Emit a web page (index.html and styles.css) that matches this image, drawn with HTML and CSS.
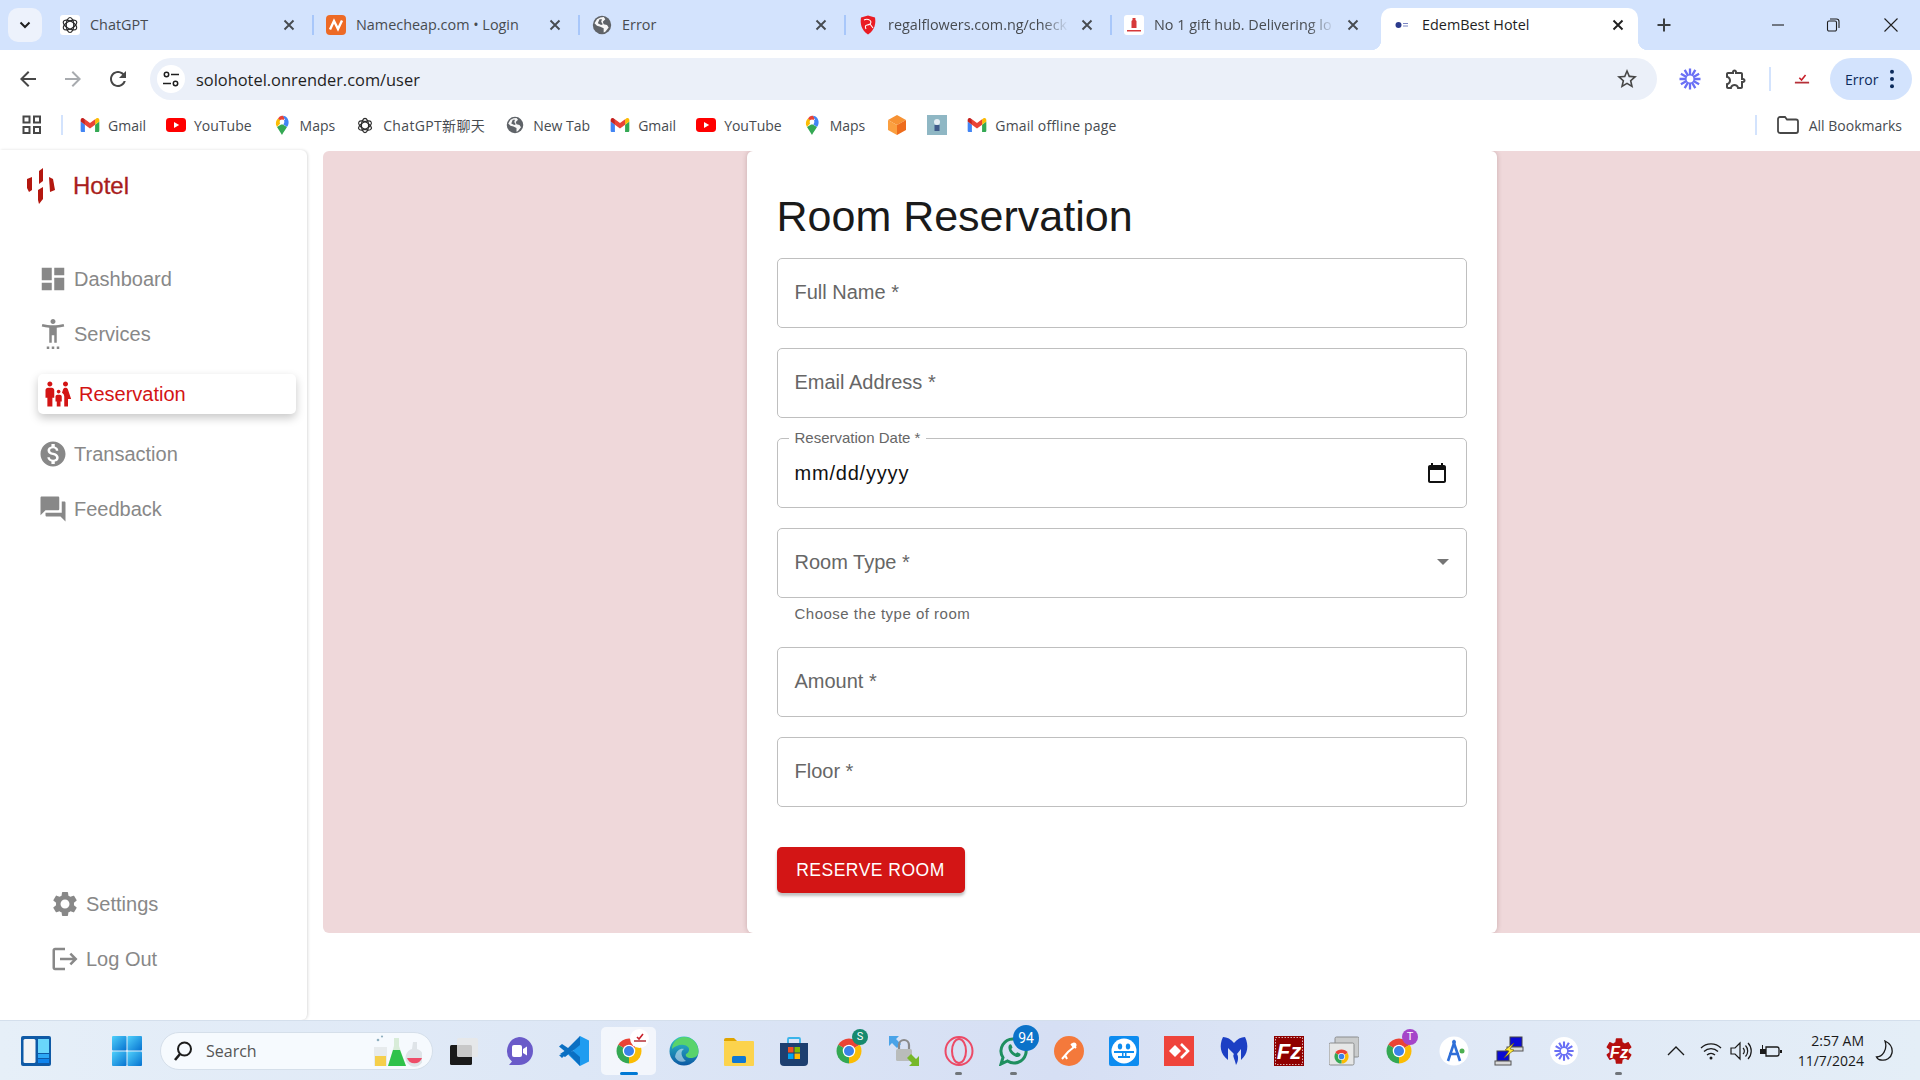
FILE: index.html
```html
<!DOCTYPE html>
<html lang="en">
<head>
    <meta charset="UTF-8">
    <meta name="viewport" content="width=device-width, initial-scale=1.0">
    <title>EdemBest Hotel</title>
    <link rel="stylesheet" href="styles.css">
</head>
<body>
    <!-- shared icons -->
    <svg class="defs" width="0" height="0">
        <defs>
            <linearGradient id="winBlue" x1="0" y1="0" x2="1" y2="1">
                <stop offset="0" stop-color="#4fd0fb"/>
                <stop offset="1" stop-color="#0672d0"/>
            </linearGradient>
            <linearGradient id="edgeBlue" x1="0" y1="0" x2="0" y2="1">
                <stop offset="0" stop-color="#2fc3c8"/>
                <stop offset="1" stop-color="#0c59a4"/>
            </linearGradient>
            <symbol id="i-openai" viewBox="0 0 24 24">
                <g fill="none" stroke="#2b2b2b" stroke-width="1.6">
                    <ellipse cx="12" cy="12" rx="5" ry="10"/>
                    <ellipse cx="12" cy="12" rx="5" ry="10" transform="rotate(60 12 12)"/>
                    <ellipse cx="12" cy="12" rx="5" ry="10" transform="rotate(120 12 12)"/>
                </g>
            </symbol>
            <symbol id="i-globe" viewBox="0 0 24 24">
                <circle cx="12" cy="12" r="11" fill="#5f6368"/>
                <path fill="#fff" d="M10 3 14 2.5 16 5 13 8 14 11 18 12 20 15 16 20 14 21 14 16 10 14 6 13 3 10 6 5Z" opacity=".95"/>
                <path fill="#5f6368" d="M9 5 12 5 11 8 13 11 11 12 7 10Z"/>
            </symbol>
            <symbol id="i-gmail" viewBox="52 42 88 66">
                <path fill="#4285f4" d="M58 108h14V74L52 59v43c0 3.32 2.69 6 6 6"/>
                <path fill="#34a853" d="M120 108h14c3.32 0 6-2.69 6-6V59l-20 15"/>
                <path fill="#fbbc04" d="M120 48v26l20-15v-8c0-7.42-8.47-11.65-14.4-7.2"/>
                <path fill="#ea4335" d="M72 74V48l24 18 24-18v26L96 92"/>
                <path fill="#c5221f" d="M52 51v8l20 15V48l-5.6-4.2c-5.94-4.45-14.4-.22-14.4 7.2"/>
            </symbol>
            <symbol id="i-youtube" viewBox="0 0 20 14">
                <rect width="20" height="14" rx="3.4" fill="#f00"/>
                <path fill="#fff" d="M8 4 13.2 7 8 10Z"/>
            </symbol>
            <symbol id="i-maps" viewBox="0 0 14 20">
                <path fill="#34a853" d="M2 12 7 20C8.4 17 10 15.5 12 12L7 9Z"/>
                <path fill="#fbbc04" d="M1 9.5C1.3 10.6 1.5 11.2 2 12L7 6.5 3 3.5C1.3 5 .6 7.4 1 9.5Z"/>
                <path fill="#ea4335" d="M3 3.5 7 7 10 3 8 .8C6 .2 4.2 1.8 3 3.5Z"/>
                <path fill="#4285f4" d="M8 .8C11 .8 14 4 13.6 8 13.3 10 13 10.6 12 12L6.5 8 10 4.5Z"/>
                <circle cx="7" cy="7" r="2.4" fill="#fff"/>
            </symbol>
            <symbol id="i-asterisk" viewBox="0 0 24 24">
                <path stroke="#696ff5" stroke-width="2.3" d="M12 1.5V22.5M1.5 12H22.5M2.9 6.7 21.1 17.3M2.9 17.3 21.1 6.7M6.7 2.9 17.3 21.1M17.3 2.9 6.7 21.1"/>
                <circle cx="12" cy="12" r="3.4" fill="#fff"/>
            </symbol>
            <symbol id="i-chrome" viewBox="0 0 48 48">
                <path fill="#ea4335" d="M24 24 6.68 14A20 20 0 0 1 41.32 14Z"/>
                <path fill="#fbbc04" d="M24 24 41.32 14A20 20 0 0 1 24 44Z"/>
                <path fill="#34a853" d="M24 24 24 44A20 20 0 0 1 6.68 14Z"/>
                <circle cx="24" cy="24" r="10" fill="#fff"/>
                <circle cx="24" cy="24" r="8" fill="#3b82e8"/>
            </symbol>
            <symbol id="i-dashboard" viewBox="0 0 24 24">
                <path d="M3 13h8V3H3v10zm0 8h8v-6H3v6zm10 0h8V11h-8v10zm0-18v6h8V3h-8z"/>
            </symbol>
            <symbol id="i-access" viewBox="0 0 24 24">
                <path d="M20.5 4c-2.61.7-5.67 1-8.5 1s-5.89-.3-8.5-1L3 6c1.86.5 4 .83 6 1v12h2v-6h2v6h2V7c2-.17 4.14-.5 6-1l-.5-2zM12 4c1.1 0 2-.9 2-2s-.9-2-2-2-2 .9-2 2 .9 2 2 2zM7 24h2v-2H7v2zm4 0h2v-2h-2v2zm4 0h2v-2h-2v2z"/>
            </symbol>
            <symbol id="i-family" viewBox="0 0 24 24">
                <path d="M16 4c0-1.11.89-2 2-2s2 .89 2 2-.89 2-2 2-2-.89-2-2zm4 18v-6h2.5l-2.54-7.63C19.68 7.55 18.92 7 18.06 7h-.12c-.86 0-1.63.55-1.9 1.37l-.86 2.58c1.08.6 1.82 1.73 1.82 3.05v8h3zm-7.5-10.5c.83 0 1.5-.67 1.5-1.5s-.67-1.5-1.5-1.5S11 9.17 11 10s.67 1.5 1.5 1.5zM5.5 6c1.11 0 2-.89 2-2s-.89-2-2-2-2 .89-2 2 .89 2 2 2zm2 16v-7H9V9c0-1.1-.9-2-2-2H4c-1.1 0-2 .9-2 2v6h1.5v7h4zm6.5 0v-4h1v-4c0-.82-.68-1.5-1.5-1.5h-2c-.82 0-1.5.68-1.5 1.5v4h1v4h3z"/>
            </symbol>
            <symbol id="i-money" viewBox="0 0 24 24">
                <path d="M12 2C6.48 2 2 6.48 2 12s4.48 10 10 10 10-4.48 10-10S17.52 2 12 2zm1.41 16.09V20h-2.67v-1.93c-1.71-.36-3.16-1.46-3.27-3.4h1.96c.1 1.05.82 1.87 2.65 1.87 1.96 0 2.4-.98 2.4-1.59 0-.83-.44-1.61-2.67-2.14-2.48-.6-4.18-1.62-4.18-3.67 0-1.72 1.39-2.84 3.11-3.21V4h2.67v1.95c1.86.45 2.79 1.86 2.85 3.39H14.3c-.05-1.11-.64-1.87-2.22-1.87-1.5 0-2.4.68-2.4 1.64 0 .84.65 1.39 2.67 1.91s4.18 1.39 4.18 3.91c-.01 1.83-1.38 2.83-3.12 3.16z"/>
            </symbol>
            <symbol id="i-forum" viewBox="0 0 24 24">
                <path d="M21 6h-2v9H6v2c0 .55.45 1 1 1h11l4 4V7c0-.55-.45-1-1-1zm-4 6V3c0-.55-.45-1-1-1H3c-.55 0-1 .45-1 1v14l4-4h10c.55 0 1-.45 1-1z"/>
            </symbol>
            <symbol id="i-settings" viewBox="0 0 24 24">
                <path d="M19.14 12.94c.04-.3.06-.61.06-.94 0-.32-.02-.64-.07-.94l2.03-1.58c.18-.14.23-.41.12-.61l-1.92-3.32c-.12-.22-.37-.29-.59-.22l-2.39.96c-.5-.38-1.03-.7-1.62-.94l-.36-2.54c-.04-.24-.24-.41-.48-.41h-3.84c-.24 0-.43.17-.47.41l-.36 2.54c-.59.24-1.13.57-1.62.94l-2.39-.96c-.22-.08-.47 0-.59.22L2.74 8.87c-.12.21-.08.47.12.61l2.03 1.58c-.05.3-.09.63-.09.94s.02.64.07.94l-2.03 1.58c-.18.14-.23.41-.12.61l1.92 3.32c.12.22.37.29.59.22l2.39-.96c.5.38 1.03.7 1.62.94l.36 2.54c.05.24.24.41.48.41h3.84c.24 0 .44-.17.47-.41l.36-2.54c.59-.24 1.13-.56 1.62-.94l2.39.96c.22.08.47 0 .59-.22l1.92-3.32c.12-.22.07-.47-.12-.61l-2.01-1.58zM12 15.6c-1.98 0-3.6-1.62-3.6-3.6s1.62-3.6 3.6-3.6 3.6 1.62 3.6 3.6-1.62 3.6-3.6 3.6z"/>
            </symbol>
            <symbol id="i-logout" viewBox="0 0 24 24">
                <path d="m17 7-1.41 1.41L18.17 11H8v2h10.17l-2.58 2.58L17 17l5-5zM4 5h8V3H4c-1.1 0-2 .9-2 2v14c0 1.1.9 2 2 2h8v-2H4V5z"/>
            </symbol>
            <symbol id="i-close" viewBox="0 0 16 16">
                <path fill="none" stroke="currentColor" stroke-width="1.9" d="M3.5 3.5 12.5 12.5M12.5 3.5 3.5 12.5"/>
            </symbol>
        </defs>
    </svg>

    <div class="browser">
        <div class="tabstrip">
            <button class="tab-list">
                <svg width="14" height="14" viewBox="0 0 14 14"><path fill="none" stroke="#1f1f1f" stroke-width="2" d="M2.5 4.5 7 9l4.5-4.5"/></svg>
            </button>
            <div class="tab">
                <span class="favicon fav-white"><svg width="18" height="18"><use href="#i-openai"/></svg></span>
                <span class="tab-title">ChatGPT</span>
                <svg class="tab-close" width="16" height="16"><use href="#i-close"/></svg>
            </div>
            <div class="tab">
                <span class="favicon fav-orange">
                    <svg width="20" height="20" viewBox="0 0 20 20"><path fill="none" stroke="#fff" stroke-width="2.4" d="M4 14.5 8 6 12 14 16 5.5"/></svg>
                </span>
                <span class="tab-title">Namecheap.com • Login</span>
                <svg class="tab-close" width="16" height="16"><use href="#i-close"/></svg>
            </div>
            <div class="tab">
                <span class="favicon"><svg width="20" height="20"><use href="#i-globe"/></svg></span>
                <span class="tab-title">Error</span>
                <svg class="tab-close" width="16" height="16"><use href="#i-close"/></svg>
            </div>
            <div class="tab">
                <span class="favicon">
                    <svg width="20" height="20" viewBox="0 0 20 20"><path fill="#ea1c24" d="M3 2.5 10 .5 17 2.5C18 8 17 15 10 19.5 3 15 2 8 3 2.5Z"/><path fill="none" stroke="#fff" stroke-width="1.1" d="M6 5C10 3 15 6 12 9 9 11 6 9 8 14M12 9 15 13"/></svg>
                </span>
                <span class="tab-title fade">regalflowers.com.ng/check</span>
                <svg class="tab-close" width="16" height="16"><use href="#i-close"/></svg>
            </div>
            <div class="tab no-sep">
                <span class="favicon fav-white">
                    <svg width="20" height="20" viewBox="0 0 20 20"><path fill="#d6393a" d="M8.5 3h3v2l1 1v7h-5V6l1-1Z"/><path fill="#d6393a" d="M3 15h14v1.5H3z"/></svg>
                </span>
                <span class="tab-title fade">No 1 gift hub. Delivering lo</span>
                <svg class="tab-close" width="16" height="16"><use href="#i-close"/></svg>
            </div>
            <div class="tab tab-active">
                <span class="favicon">
                    <svg width="16" height="16" viewBox="0 0 16 16"><circle cx="4.5" cy="8" r="3" fill="#2b3a8c"/><path fill="#7b86c4" d="M9 6h5v1H9zM9 8.5h5v1H9z"/></svg>
                </span>
                <span class="tab-title">EdemBest Hotel</span>
                <svg class="tab-close" width="16" height="16"><use href="#i-close"/></svg>
            </div>
            <button class="new-tab">
                <svg width="16" height="16" viewBox="0 0 16 16"><path stroke="#3c4043" stroke-width="2" d="M8 1.5v13M1.5 8h13"/></svg>
            </button>
            <div class="win-controls">
                <svg width="16" height="16" viewBox="0 0 16 16"><path stroke="#1f1f1f" stroke-width="1.1" d="M2 8h12"/></svg>
                <svg width="16" height="16" viewBox="0 0 16 16"><path fill="none" stroke="#1f1f1f" stroke-width="1.1" d="M2.5 5.5A1.5 1.5 0 0 1 4 4h6a1.5 1.5 0 0 1 1.5 1.5v7A1.5 1.5 0 0 1 10 14H4a1.5 1.5 0 0 1-1.5-1.5zM5 2h6.5A2.5 2.5 0 0 1 14 4.5V11"/></svg>
                <svg class="win-close" width="16" height="16" viewBox="0 0 16 16"><path stroke="#1f1f1f" stroke-width="1.1" d="M1.5 1.5l13 13M14.5 1.5l-13 13"/></svg>
            </div>
        </div>

        <div class="toolbar">
            <button class="nav-btn"><svg width="24" height="24" viewBox="0 0 24 24"><path fill="#474747" d="M20 11H7.83l5.59-5.59L12 4l-8 8 8 8 1.41-1.41L7.83 13H20v-2z"/></svg></button>
            <button class="nav-btn"><svg width="24" height="24" viewBox="0 0 24 24"><path fill="#a8abaf" d="M12 4l-1.41 1.41L16.17 11H4v2h12.17l-5.58 5.59L12 20l8-8z"/></svg></button>
            <button class="nav-btn"><svg width="24" height="24" viewBox="0 0 24 24"><path fill="#474747" d="M17.65 6.35C16.2 4.9 14.21 4 12 4c-4.42 0-7.99 3.58-7.99 8s3.57 8 7.99 8c3.73 0 6.84-2.55 7.73-6h-2.08c-.82 2.33-3.04 4-5.65 4-3.31 0-6-2.69-6-6s2.69-6 6-6c1.66 0 3.14.69 4.22 1.78L13 11h7V4l-2.35 2.35z"/></svg></button>
            <div class="omnibox">
                <span class="site-info">
                    <svg width="18" height="18" viewBox="0 0 18 18"><g fill="none" stroke="#1f1f1f" stroke-width="1.5"><circle cx="4.5" cy="4.5" r="2.2"/><circle cx="13.5" cy="13.5" r="2.2"/><path d="M9 4.5h8M1 13.5h8"/></g></svg>
                </span>
                <span class="url">solohotel.onrender.com/user</span>
                <svg class="star" width="24" height="24" viewBox="0 0 24 24"><path fill="#474747" d="M22 9.24l-7.19-.62L12 2 9.19 8.63 2 9.24l5.46 4.73L5.82 21 12 17.27 18.18 21l-1.63-7.03L22 9.24zM12 15.4l-3.76 2.27 1-4.28-3.32-2.88 4.38-.38L12 6.1l1.71 4.04 4.38.38-3.32 2.88 1 4.28L12 15.4z"/></svg>
            </div>
            <button class="tool-btn"><svg width="24" height="24"><use href="#i-asterisk"/></svg></button>
            <button class="tool-btn">
                <svg width="24" height="24" viewBox="0 0 24 24"><path fill="#474747" d="M10.5 4.5c.28 0 .5.22.5.5v2h6v6h2c.28 0 .5.22.5.5s-.22.5-.5.5h-2v6h-2.12c-.68-1.75-2.39-3-4.38-3s-3.7 1.25-4.38 3H4v-2.12c1.75-.68 3-2.39 3-4.38 0-1.99-1.24-3.7-2.99-4.38L4 7h6V5c0-.28.22-.5.5-.5m0-2C9.12 2.5 8 3.62 8 5H4c-1.1 0-1.99.9-1.99 2v3.8h.29c1.49 0 2.7 1.21 2.7 2.7s-1.21 2.7-2.7 2.7H2V20c0 1.1.9 2 2 2h3.8v-.3c0-1.49 1.21-2.7 2.7-2.7s2.7 1.21 2.7 2.7v.3H17c1.1 0 2-.9 2-2v-4c1.38 0 2.5-1.12 2.5-2.5S20.38 11 19 11V7c0-1.1-.9-2-2-2h-4c0-1.38-1.12-2.5-2.5-2.5z"/></svg>
            </button>
            <span class="tool-sep"></span>
            <span class="profile-pic">
                <svg width="16" height="11" viewBox="0 0 18 12"><path fill="none" stroke="#c8202a" stroke-width="1.8" d="M6 4 8.5 6.5 13 1"/><path stroke="#b53038" stroke-width="2" d="M1 9.5h16"/></svg>
            </span>
            <div class="profile-pill">
                <span>Error</span>
                <svg width="6" height="20" viewBox="0 0 6 22"><g fill="#0b2a5b"><circle cx="3" cy="3" r="2.2"/><circle cx="3" cy="11" r="2.2"/><circle cx="3" cy="19" r="2.2"/></g></svg>
            </div>
        </div>

        <div class="bookmarks">
            <svg class="apps" width="20" height="20" viewBox="0 0 20 20"><g fill="none" stroke="#474747" stroke-width="2"><rect x="1.5" y="1.5" width="6" height="6"/><rect x="12" y="1.5" width="6" height="6"/><rect x="1.5" y="12" width="6" height="6"/><rect x="12" y="12" width="6" height="6"/></g></svg>
            <span class="bm-sep"></span>
            <span class="bm"><svg height="14"><use href="#i-gmail"/></svg>Gmail</span>
            <span class="bm"><svg height="14"><use href="#i-youtube"/></svg>YouTube</span>
            <span class="bm"><svg height="20"><use href="#i-maps"/></svg>Maps</span>
            <span class="bm bm-cjk"><svg height="17"><use href="#i-openai"/></svg>ChatGPT新聊天</span>
            <span class="bm"><svg height="18"><use href="#i-globe"/></svg>New Tab</span>
            <span class="bm"><svg height="14"><use href="#i-gmail"/></svg>Gmail</span>
            <span class="bm"><svg height="14"><use href="#i-youtube"/></svg>YouTube</span>
            <span class="bm bm-wide"><svg height="20"><use href="#i-maps"/></svg>Maps</span>
            <span class="bm">
                <svg height="20" viewBox="0 0 20 20"><path fill="#f79233" d="M10 0 19 5 10 10 1 5Z"/><path fill="#fb9f3f" d="M1 5 10 10V20L1 15Z"/><path fill="#ee6c1c" d="M19 5V15L10 20V10Z"/></svg>
            </span>
            <span class="bm">
                <svg height="20" viewBox="0 0 20 20"><rect width="20" height="20" fill="#8fb7c4"/><circle cx="10" cy="7" r="3" fill="#e4edf3"/><rect x="7.5" y="10" width="5" height="6" fill="#3f5a8a"/></svg>
            </span>
            <span class="bm bm-last"><svg height="14"><use href="#i-gmail"/></svg>Gmail offline page</span>
            <span class="bm-sep bm-sep-right"></span>
            <span class="bm all-bm">
                <svg height="18" viewBox="0 0 22 18"><path fill="none" stroke="#474747" stroke-width="1.8" d="M1 3a2 2 0 0 1 2-2h5l2 2.5h9a2 2 0 0 1 2 2V15a2 2 0 0 1-2 2H3a2 2 0 0 1-2-2Z"/></svg>
                All Bookmarks
            </span>
        </div>

        <div class="page">
            <aside class="sidebar">
                <div class="brand">
                    <svg width="28" height="36" viewBox="0 0 28 36"><g fill="#b3170f"><path d="M0 11 5 9V22L2 24 0 20Z"/><path d="M12 3 16 0V13L12 16Z"/><path d="M11 22 16 19V31L12 36 11 32Z"/><path d="M22 9 26 11 28 22 23 24Z"/></g></svg>
                    <span>Hotel</span>
                </div>
                <nav class="nav-main">
                    <a class="nav-item"><svg class="nav-icon"><use href="#i-dashboard"/></svg>Dashboard</a>
                    <a class="nav-item"><svg class="nav-icon"><use href="#i-access"/></svg>Services</a>
                    <a class="nav-item active"><svg class="nav-icon"><use href="#i-family"/></svg>Reservation</a>
                    <a class="nav-item"><svg class="nav-icon"><use href="#i-money"/></svg>Transaction</a>
                    <a class="nav-item"><svg class="nav-icon"><use href="#i-forum"/></svg>Feedback</a>
                </nav>
                <nav class="nav-bottom">
                    <a class="nav-item"><svg class="nav-icon"><use href="#i-settings"/></svg>Settings</a>
                    <a class="nav-item"><svg class="nav-icon"><use href="#i-logout"/></svg>Log Out</a>
                </nav>
            </aside>

            <main class="content">
                <div class="hero">
                    <section class="card">
                        <h1>Room Reservation</h1>
                        <form class="form">
                            <div class="field"><label>Full Name *</label></div>
                            <div class="field"><label>Email Address *</label></div>
                            <div class="field field-date">
                                <label class="float-label">Reservation Date *</label>
                                <span class="date-value">mm/dd/yyyy</span>
                                <svg width="24" height="24" viewBox="0 0 24 24"><path fill="#111" d="M19 4h-1V2h-2v2H8V2H6v2H5c-1.1 0-2 .9-2 2v14c0 1.1.9 2 2 2h14c1.1 0 2-.9 2-2V6c0-1.1-.9-2-2-2zm0 16H5V9h14v11z"/></svg>
                            </div>
                            <div class="field field-select">
                                <label>Room Type *</label>
                                <span class="arrow"></span>
                            </div>
                            <p class="helper">Choose the type of room</p>
                            <div class="field"><label>Amount *</label></div>
                            <div class="field"><label>Floor *</label></div>
                            <button class="reserve" type="button">RESERVE ROOM</button>
                        </form>
                    </section>
                </div>
            </main>
        </div>
    </div>

    <footer class="taskbar">
        <span class="tb-icon tb-widgets">
            <svg width="30" height="30" viewBox="0 0 30 30"><rect width="30" height="30" rx="2" fill="#0f5aa6"/><rect x="2.5" y="3" width="12" height="24" rx="1.5" fill="#f2f4f6"/><rect x="17" y="3" width="11" height="14" fill="#6ad6fb"/><rect x="17" y="18" width="11" height="4" fill="#2ea8f5"/><rect x="17" y="23" width="11" height="4" fill="#0f84ee"/></svg>
        </span>
        <span class="tb-icon tb-start">
            <svg width="30" height="30" viewBox="0 0 30 30"><g fill="url(#winBlue)"><rect width="14.5" height="14.5" rx="1"/><rect x="15.5" width="14.5" height="14.5" rx="1"/><rect y="15.5" width="14.5" height="14.5" rx="1"/><rect x="15.5" y="15.5" width="14.5" height="14.5" rx="1"/></g></svg>
        </span>
        <div class="tb-search">
            <svg width="22" height="22" viewBox="0 0 22 22"><g fill="none" stroke="#1c1c1c" stroke-width="2"><circle cx="12.5" cy="9" r="6.5"/><path d="M8 14 3 20" stroke-width="2.6"/></g></svg>
            <span>Search</span>
            <svg class="flasks" width="52" height="34" viewBox="0 0 52 34">
                <path fill="#e7ebed" d="M4 13h13v19H4z"/><path fill="#f5cf4b" d="M5 22h11v10H5z"/>
                <path fill="#d8ecd8" d="M24 4h5v8l7 20H18l6-20Z"/><path fill="#2fc24a" d="M23 16h7l6 16H18Z"/>
                <path fill="#dfe4e8" d="M43 8h4v7a9 9 0 1 1-5 0Z"/><path fill="#ee4d68" d="M37 24h15a8 8 0 0 1-15 0Z"/>
                <circle cx="8" cy="6" r="1.3" fill="#8fb0c0"/><circle cx="12" cy="2.5" r="1.1" fill="#8fb0c0"/>
            </svg>
        </div>
        <div class="tb-apps">
            <span class="tb-icon">
                <svg width="30" height="30" viewBox="0 0 30 30"><rect x="1" y="9" width="22" height="20" rx="1.5" fill="#1a1a1a"/><rect x="8" y="2" width="21" height="19" rx="1.5" fill="#e8e8e8" opacity=".85"/></svg>
            </span>
            <span class="tb-icon">
                <svg width="30" height="30" viewBox="0 0 30 30"><path fill="#6a5bc9" d="M15 1a14 14 0 0 1 0 28H5l3-3.5A14 14 0 0 1 15 1Z"/><rect x="8" y="9" width="10" height="12" rx="2" fill="#fff"/><path fill="#fff" d="M19 13l4-2.5v9L19 17Z"/></svg>
            </span>
            <span class="tb-icon">
                <svg width="30" height="30" viewBox="0 0 30 30"><path fill="#1f9cf0" d="M21 0 30 4.5V25.5L21 30 9 18.5 14 15Z"/><path fill="#0a6fc2" d="M21 0 21 9 6 21 1 18 5.5 15 0 10.5 3 8 9 12Z"/><path fill="#0a6fc2" d="M9 17 21 30 21 21 14 15ZM0 19 3 22 7 18Z"/></svg>
            </span>
            <span class="tb-icon tb-active">
                <svg width="30" height="30"><use href="#i-chrome"/></svg>
                <span class="mini-badge">
                    <svg width="14" height="10" viewBox="0 0 14 10"><path fill="none" stroke="#c8202a" stroke-width="1.6" d="M4 4 6 6 10 1"/><path stroke="#b53038" stroke-width="1.5" d="M1 8h12"/></svg>
                </span>
            </span>
            <span class="tb-icon">
                <svg width="30" height="30" viewBox="0 0 30 30"><circle cx="15" cy="15" r="14.5" fill="url(#edgeBlue)"/><path fill="#59d36b" d="M15 1C23 1 29.5 7 29.5 15.5 29.5 20 26 22 22 22 18 22 16 20 17 18 20 17 21 13 19 11 15 7 7 9 3 13 3 6 9 1 15 1Z"/><path fill="#e2f3fa" d="M6 21C7 14 12 12 15 13 11 15 12 21 17 25 12 27 8 25 6 21Z" opacity=".55"/></svg>
            </span>
            <span class="tb-icon">
                <svg width="30" height="30" viewBox="0 0 30 30"><path fill="#dfa400" d="M0 4a2 2 0 0 1 2-2h8l3 3H0Z"/><rect y="5" width="30" height="25" rx="1" fill="#fcd34d"/><rect x="8" y="20" width="14" height="7" rx="1.5" fill="#0f78d4"/></svg>
            </span>
            <span class="tb-icon">
                <svg width="30" height="30" viewBox="0 0 30 30"><path fill="none" stroke="#3ab4ea" stroke-width="1.8" d="M9 7V3a1 1 0 0 1 1-1h10a1 1 0 0 1 1 1v4"/><path fill="#1d3f70" d="M1 7h28v19a4 4 0 0 1-4 4H5a4 4 0 0 1-4-4Z"/><rect x="9" y="11" width="5.5" height="5.5" fill="#f25022"/><rect x="15.5" y="11" width="5.5" height="5.5" fill="#7fba00"/><rect x="9" y="17.5" width="5.5" height="5.5" fill="#00a4ef"/><rect x="15.5" y="17.5" width="5.5" height="5.5" fill="#ffb900"/></svg>
            </span>
            <span class="tb-icon">
                <svg width="30" height="30"><use href="#i-chrome"/></svg>
                <span class="app-badge badge-green">S</span>
            </span>
            <span class="tb-icon">
                <svg width="30" height="30" viewBox="0 0 30 30"><path fill="#4aa3e8" d="M0 0h10L7 3 12 8 8 12 3 7 0 10Z"/><path fill="none" stroke="#8a8a8a" stroke-width="2.2" d="M10 13V9a5 5 0 0 1 10 0v4"/><rect x="7" y="13" width="16" height="12" rx="1.5" fill="#b9bcbb"/><path fill="#76b82a" d="M30 30H20L23 27 18 22 22 18 27 23 30 20Z"/></svg>
            </span>
            <span class="tb-icon tb-running">
                <svg width="30" height="30" viewBox="0 0 30 30"><ellipse cx="15" cy="15" rx="13.5" ry="14" fill="none" stroke="#ec4a66" stroke-width="2"/><ellipse cx="15" cy="15" rx="7" ry="12" fill="none" stroke="#ec4a66" stroke-width="2"/></svg>
            </span>
            <span class="tb-icon tb-running">
                <svg width="30" height="30" viewBox="0 0 30 30"><path fill="none" stroke="#1f8f5f" stroke-width="3" d="M15 3a12 12 0 1 1-6.5 22L2 28l2-6.5A12 12 0 0 1 15 3Z"/><path fill="#1f8f5f" d="M10 9c1-1 2-1 2.5 0l1 2.5-1.2 1.5c1 2 2.5 3.5 4.5 4.5l1.5-1.3 2.7 1.3c.8.5.8 1.5 0 2.5-2 2-5 1-8-1.5S8.5 12 10 9Z"/></svg>
                <span class="app-badge badge-count">94</span>
            </span>
            <span class="tb-icon">
                <svg width="30" height="30" viewBox="0 0 30 30"><circle cx="15" cy="15" r="15" fill="#f4793b"/><path fill="none" stroke="#fff" stroke-width="2" d="M8 23 14 16 20 11M17 8l5 4M11 19l2 4"/><circle cx="20" cy="9" r="2.5" fill="#fff"/></svg>
            </span>
            <span class="tb-icon">
                <svg width="30" height="30" viewBox="0 0 30 30"><rect width="30" height="30" rx="2" fill="#0d8cf0"/><circle cx="15" cy="15" r="12.5" fill="#fff"/><g fill="#0d8cf0"><ellipse cx="11" cy="10.5" rx="2.2" ry="3"/><ellipse cx="19" cy="10.5" rx="2.2" ry="3"/><path d="M5 15h20v2H5zM9 20h12v2H9zM13 17h1.5v3H13zM16 17h1.5v3H16z"/></g></svg>
            </span>
            <span class="tb-icon">
                <svg width="30" height="30" viewBox="0 0 30 30"><rect width="30" height="30" fill="#ef443b"/><path fill="#fff" d="M11 9l6 6-6 6-6-6Z"/><path fill="none" stroke="#fff" stroke-width="2.6" d="M17 8l7 7-7 7"/></svg>
            </span>
            <span class="tb-icon">
                <svg width="30" height="30" viewBox="0 0 30 30"><path fill="#1c3fc4" d="M15 7C18 3 22 1 26 1 30 9 29 18 22 24V13L18 18C20 21 19 26 17 29 16 23 13 20 15 18L9 12V24C1 18 0 9 4 1 8 1 12 3 15 7Z"/></svg>
            </span>
            <span class="tb-icon">
                <svg width="30" height="30" viewBox="0 0 30 30"><rect width="30" height="30" fill="#8f0000"/><rect x="1.5" y="1.5" width="27" height="27" fill="none" stroke="#d9b0b0" stroke-width="1" stroke-dasharray="1.5 1.5"/><text x="15" y="23" text-anchor="middle" class="fz-text" font-size="22">Fz</text></svg>
            </span>
            <span class="tb-icon">
                <svg width="30" height="30" viewBox="0 0 30 30"><rect x="6" y="1" width="24" height="20" rx="1.5" fill="#c9cbcc" stroke="#8b8d8e"/><rect x="0" y="7" width="25" height="22" rx="1.5" fill="#e6e7e7" stroke="#8b8d8e"/><svg x="4" y="12" width="17" height="17"><use href="#i-chrome"/></svg></svg>
            </span>
            <span class="tb-icon">
                <svg width="30" height="30"><use href="#i-chrome"/></svg>
                <span class="app-badge badge-purple">T</span>
            </span>
            <span class="tb-icon">
                <svg width="30" height="30" viewBox="0 0 30 30"><circle cx="15" cy="15" r="14.5" fill="#fff"/><path fill="none" stroke="#2f6fd8" stroke-width="2.6" d="M9 25 15 7 21 25M10 18H20"/><circle cx="15" cy="6" r="2" fill="#2f6fd8"/><circle cx="23" cy="15" r="2.5" fill="#4caf50"/></svg>
            </span>
            <span class="tb-icon">
                <svg width="30" height="30" viewBox="0 0 30 30"><rect x="16" y="1" width="12" height="10" fill="#0a0ad4" stroke="#444"/><rect x="13" y="11" width="16" height="4" fill="#d9d9d9" stroke="#555"/><rect x="3" y="15" width="12" height="10" fill="#0a0ad4" stroke="#444"/><rect x="1" y="25" width="16" height="4" fill="#d9d9d9" stroke="#555"/><path fill="#ffe93b" stroke="#6b5d00" stroke-width=".6" d="M20 7 11 14 15 15 10 22 20 14 16 13Z"/></svg>
            </span>
            <span class="tb-icon">
                <svg width="28" height="28" viewBox="0 0 28 28"><circle cx="14" cy="14" r="14" fill="#fff"/><svg x="3" y="3" width="22" height="22"><use href="#i-asterisk"/></svg></svg>
            </span>
            <span class="tb-icon tb-running">
                <svg width="32" height="32" viewBox="0 0 24 24"><path fill="#b50f0f" d="M19.14 12.94c.04-.3.06-.61.06-.94 0-.32-.02-.64-.07-.94l2.03-1.58c.18-.14.23-.41.12-.61l-1.92-3.32c-.12-.22-.37-.29-.59-.22l-2.39.96c-.5-.38-1.03-.7-1.62-.94l-.36-2.54c-.04-.24-.24-.41-.48-.41h-3.84c-.24 0-.43.17-.47.41l-.36 2.54c-.59.24-1.13.57-1.62.94l-2.39-.96c-.22-.08-.47 0-.59.22L2.74 8.87c-.12.21-.08.47.12.61l2.03 1.58c-.05.3-.09.63-.09.94s.02.64.07.94l-2.03 1.58c-.18.14-.23.41-.12.61l1.92 3.32c.12.22.37.29.59.22l2.39-.96c.5.38 1.03.7 1.62.94l.36 2.54c.05.24.24.41.48.41h3.84c.24 0 .44-.17.47-.41l.36-2.54c.59-.24 1.13-.56 1.62-.94l2.39.96c.22.08.47 0 .59-.22l1.92-3.32c.12-.22.07-.47-.12-.61l-2.01-1.58z"/><text x="12" y="17" text-anchor="middle" class="fz-text" font-size="12.5">Fz</text></svg>
            </span>
        </div>
        <div class="tray">
            <svg class="tray-up" width="18" height="10" viewBox="0 0 18 10"><path fill="none" stroke="#1a1a1a" stroke-width="1.3" d="M1 9 9 1l8 8"/></svg>
            <svg width="22" height="18" viewBox="0 0 22 18"><g fill="none" stroke="#1a1a1a" stroke-width="1.3"><path d="M1 6a14 14 0 0 1 20 0M4 9.5a10 10 0 0 1 14 0M7 13a6 6 0 0 1 8 0"/></g><circle cx="11" cy="16" r="1.5" fill="#1a1a1a"/></svg>
            <svg width="22" height="20" viewBox="0 0 22 20"><g fill="none" stroke="#1a1a1a" stroke-width="1.2"><path d="M1 7h4l5-5v16l-5-5H1ZM13 7a4 4 0 0 1 0 6M15.5 4.5a8 8 0 0 1 0 11M18 2a11.5 11.5 0 0 1 0 16"/></g></svg>
            <svg width="22" height="20" viewBox="0 0 22 20"><path fill="none" stroke="#1a1a1a" stroke-width="1.3" d="M6 6h11a2 2 0 0 1 2 2v5a2 2 0 0 1-2 2H6Z"/><path fill="#1a1a1a" d="M0 8h6v5H0zM2 4h1v4H2zM20 9h2v3h-2z"/></svg>
        </div>
        <div class="clock">
            <span>2:57 AM</span>
            <span>11/7/2024</span>
        </div>
        <svg class="moon" width="20" height="22" viewBox="0 0 20 22"><path fill="none" stroke="#1a1a1a" stroke-width="1.3" d="M10 1C14 3 18 7 17 13 16 18 11 21 6 20 4 20 2 18 1.5 17 7 17 13 10 10 1Z"/></svg>
    </footer>
</body>
</html>
```

FILE: styles.css
```css
* {
    box-sizing: border-box;
}
html, body {
    height: 100%;
}
body {
    margin: 0;
    width: 1920px;
    height: 1080px;
    overflow: hidden;
    display: flex;
    flex-direction: column;
    font-family: "Open Sans", "Noto Sans CJK SC", sans-serif;
    background: #fff;
}
button {
    border: none;
    background: none;
    padding: 0;
    display: flex;
    align-items: center;
    justify-content: center;
}
.defs {
    position: absolute;
}
.browser {
    height: 1020px;
    display: flex;
    flex-direction: column;
}

/* Tab strip */
.tabstrip {
    height: 50px;
    flex: none;
    display: flex;
    align-items: flex-end;
    padding-left: 8px;
    background: #d3e3fd;
}
.tab-list {
    width: 34px;
    height: 34px;
    margin: 0 6px 8px 0;
    background: #edf2fc;
    border-radius: 10px;
}
.tab {
    position: relative;
    width: 266px;
    height: 42px;
    display: flex;
    align-items: center;
    gap: 10px;
    padding: 0 17px 9px 12px;
    color: #474b50;
    font-size: 14.4px;
}
.tab::after {
    content: "";
    position: absolute;
    right: 0;
    top: 7px;
    width: 2px;
    height: 20px;
    background: #a8c7fa;
}
.tab.no-sep::after {
    display: none;
}
.favicon {
    width: 20px;
    height: 20px;
    flex: none;
    display: flex;
    align-items: center;
    justify-content: center;
}
.fav-white {
    background: #fff;
    border-radius: 3px;
}
.fav-orange {
    background: #ed6a25;
    border-radius: 4px;
}
.tab-title {
    flex: 1;
    white-space: nowrap;
    overflow: hidden;
}
.tab-title.fade {
    -webkit-mask-image: linear-gradient(90deg, #000 85%, transparent);
    mask-image: linear-gradient(90deg, #000 85%, transparent);
}
.tab-close {
    flex: none;
    color: #474b50;
}
.tab-active {
    width: 257px;
    margin-left: 3px;
    padding: 0 12px 9px 11px;
    background: #fff;
    border-radius: 10px 10px 0 0;
    color: #1f1f1f;
}
.tab-active .tab-close {
    color: #1f1f1f;
}
.tab-active::before,
.tab-active::after {
    content: "";
    position: absolute;
    top: auto;
    bottom: 0;
    width: 10px;
    height: 10px;
    background: radial-gradient(circle at 0 0, transparent 10px, #fff 10.5px);
}
.tab-active::before {
    left: -10px;
}
.tab-active::after {
    right: -10px;
    background: radial-gradient(circle at 100% 0, transparent 10px, #fff 10.5px);
}
.new-tab {
    width: 16px;
    height: 16px;
    margin: 0 0 17px 18px;
}
.win-controls {
    margin-left: auto;
    display: flex;
    align-items: center;
    gap: 39px;
    padding: 0 21px 17px 0;
}
.win-close {
    margin-left: 3px;
}

/* Toolbar */
.toolbar {
    height: 58px;
    flex: none;
    display: flex;
    align-items: center;
    padding: 0 8px 0 5px;
    background: #fff;
    border-radius: 10px 10px 0 0;
}
.nav-btn {
    width: 45px;
    height: 42px;
}
.omnibox {
    width: 1507px;
    height: 42px;
    flex: none;
    margin: 0 10px;
    display: flex;
    align-items: center;
    padding: 0 18px 0 7px;
    background: #ebf0f9;
    border-radius: 21px;
}
.site-info {
    width: 28px;
    height: 28px;
    display: flex;
    align-items: center;
    justify-content: center;
    background: #fff;
    border-radius: 50%;
}
.url {
    flex: 1;
    margin-left: 11px;
    font-size: 16.4px;
    color: #1f1f1f;
}
.tool-btn {
    width: 46px;
    height: 42px;
}
.tool-sep {
    width: 2px;
    height: 24px;
    margin-left: 10px;
    background: #d3e3fd;
}
.profile-pic {
    width: 40px;
    display: flex;
    justify-content: center;
    margin-left: 11px;
}
.profile-pill {
    width: 82px;
    height: 42px;
    margin-left: 8px;
    display: flex;
    align-items: center;
    justify-content: space-between;
    padding: 0 17px 0 15px;
    background: #d3e3fd;
    border-radius: 21px;
    font-size: 14px;
    color: #0b2a5b;
}

/* Bookmarks */
.bookmarks {
    height: 42px;
    flex: none;
    display: flex;
    align-items: center;
    padding: 0 18px 8px 22px;
    background: #fff;
    font-size: 14px;
    color: #474b50;
}
.apps {
    flex: none;
}
.bm-sep {
    width: 2px;
    height: 20px;
    margin: 0 17px 0 19px;
    background: #d3e3fd;
}
.bm {
    display: flex;
    align-items: center;
    gap: 8px;
    margin-right: 20px;
    white-space: nowrap;
}
.bm svg {
    width: 20px;
    flex: none;
}
.bm-cjk {
    letter-spacing: 0.35px;
}
.bm-wide {
    margin-right: 22px;
}
.bm-last {
    letter-spacing: 0.15px;
}
.bm-sep-right {
    margin: 0 20px 0 auto;
}
.all-bm {
    margin-right: 0;
    gap: 10px;
}
.all-bm svg {
    width: 22px;
}

/* Page */
.page {
    flex: 1;
    min-height: 0;
    display: flex;
    background: #fff;
}
.sidebar {
    width: 307px;
    flex: none;
    display: flex;
    flex-direction: column;
    padding: 18px 0 41px;
    background: #fff;
    border-radius: 0 6px 6px 0;
    box-shadow: 1px 0 3px rgba(0, 0, 0, 0.14);
    font-family: "Liberation Sans", Arial, sans-serif;
}
.brand {
    display: flex;
    align-items: center;
    gap: 18px;
    padding-left: 27px;
    font-size: 24px;
    color: #a91d1d;
    -webkit-text-stroke: 0.3px #a91d1d;
}
.nav-main {
    display: flex;
    flex-direction: column;
    margin-top: 55px;
    padding-left: 38px;
}
.nav-bottom {
    margin-top: auto;
    display: flex;
    flex-direction: column;
    padding-left: 50px;
}
.nav-item {
    height: 40px;
    margin-bottom: 15px;
    display: flex;
    align-items: center;
    gap: 6px;
    font-size: 20px;
    color: #888;
}
.nav-bottom .nav-item:last-child {
    margin-bottom: 0;
}
.nav-icon {
    width: 30px;
    height: 30px;
    flex: none;
    fill: #888;
}
.nav-item.active {
    width: 258px;
    margin: 5px 0 20px;
    padding-left: 5px;
    background: #fff;
    border-radius: 5px;
    box-shadow: 0 4px 10px rgba(0, 0, 0, 0.22);
    color: #d31414;
}
.nav-item.active .nav-icon {
    fill: #d31414;
}
.content {
    flex: 1;
    margin-left: 16px;
    padding-top: 1px;
}
.hero {
    height: 782px;
    display: flex;
    justify-content: center;
    overflow: hidden;
    background: #efd8da;
    border-radius: 6px 0 0 6px;
}
.card {
    width: 750px;
    padding: 40px 30px 40px;
    background: #fff;
    border-radius: 6px;
    box-shadow: 0 0 5px rgba(90, 40, 40, 0.25);
}
.card h1 {
    margin: 0 0 17px;
    font-family: "Liberation Sans", Arial, sans-serif;
    font-weight: 400;
    font-size: 43px;
    line-height: 50px;
    color: #1a1a1a;
}
.form {
    display: flex;
    flex-direction: column;
    gap: 20px;
    font-family: "Liberation Sans", Arial, sans-serif;
}
.field {
    position: relative;
    height: 70px;
    display: flex;
    align-items: center;
    padding: 0 17px 2px;
    border: 1px solid #bfbfbf;
    border-radius: 5px;
    font-size: 20px;
    color: #666;
}
.float-label {
    position: absolute;
    left: 11px;
    top: -10px;
    padding: 0 6px;
    background: #fff;
    font-size: 15px;
    line-height: 18px;
}
.field-date {
    justify-content: space-between;
    padding: 0 17px 0;
}
.date-value {
    color: #111;
    letter-spacing: 0.8px;
}
.field-select {
    justify-content: space-between;
    padding-right: 17px;
}
.arrow {
    width: 0;
    height: 0;
    border-left: 6px solid transparent;
    border-right: 6px solid transparent;
    border-top: 6px solid #757575;
}
.helper {
    margin: -17px 0 1px;
    padding-left: 18px;
    font-size: 15px;
    line-height: 25px;
    letter-spacing: 0.5px;
    color: #666;
}
.reserve {
    width: 188px;
    height: 46px;
    margin-top: 20px;
    background: #d31515;
    border-radius: 5px;
    box-shadow: 0 3px 3px rgba(0, 0, 0, 0.25);
    font-family: "Liberation Sans", Arial, sans-serif;
    font-size: 17.5px;
    letter-spacing: 0.5px;
    color: #fff;
}

/* Windows taskbar */
.taskbar {
    height: 60px;
    flex: none;
    display: flex;
    align-items: center;
    background: linear-gradient(90deg, #e6eff8, #dde7f6 30%, #d6dff4 55%, #dfe8f6 75%, #e4eef7);
    border-top: 1px solid #d4dfec;
}
.tb-icon {
    position: relative;
    width: 55px;
    height: 48px;
    flex: none;
    display: flex;
    align-items: center;
    justify-content: center;
}
.tb-widgets {
    margin-left: 8px;
}
.tb-start {
    margin-left: 36px;
}
.tb-search {
    width: 273px;
    height: 38px;
    margin-left: 6px;
    flex: none;
    display: flex;
    align-items: center;
    gap: 12px;
    padding-left: 11px;
    background: #f6fafe;
    border: 1px solid #d5dfea;
    border-radius: 19px;
    font-size: 16px;
    color: #555;
}
.flasks {
    margin-left: auto;
    margin-right: 10px;
}
.tb-apps {
    display: flex;
    margin-left: 3px;
}
.tb-active {
    background: rgba(255, 255, 255, 0.65);
    border-radius: 5px;
}
.tb-active::after,
.tb-running::after {
    content: "";
    position: absolute;
    left: 50%;
    bottom: 0;
    width: 7px;
    height: 3px;
    margin-left: -3.5px;
    background: #70757a;
    border-radius: 2px;
}
.tb-active::after {
    width: 18px;
    margin-left: -9px;
    background: #0078d4;
}
.app-badge {
    position: absolute;
    top: 2px;
    right: 8px;
    width: 16px;
    height: 16px;
    display: flex;
    align-items: center;
    justify-content: center;
    border-radius: 50%;
    font-family: Roboto, sans-serif;
    font-size: 11px;
    color: #fff;
}
.badge-green {
    background: #178a6f;
}
.badge-purple {
    background: #a545c9;
}
.badge-count {
    top: -2px;
    right: 2px;
    width: 26px;
    height: 26px;
    background: #0b72c9;
    font-size: 14px;
}
.mini-badge {
    position: absolute;
    top: 2px;
    right: 7px;
    width: 19px;
    height: 19px;
    display: flex;
    align-items: center;
    justify-content: center;
    background: #fff;
    border-radius: 50%;
}
.fz-text {
    font-family: "Liberation Sans", sans-serif;
    font-style: italic;
    font-weight: 700;
    fill: #fff;
}
.tray {
    display: flex;
    align-items: center;
    gap: 8px;
    margin-left: 21px;
}
.tray-up {
    margin-right: 7px;
}
.clock {
    width: 82px;
    display: flex;
    flex-direction: column;
    align-items: flex-end;
    font-size: 14px;
    line-height: 20px;
    color: #1a1a1a;
}
.moon {
    margin-left: 11px;
}
```
